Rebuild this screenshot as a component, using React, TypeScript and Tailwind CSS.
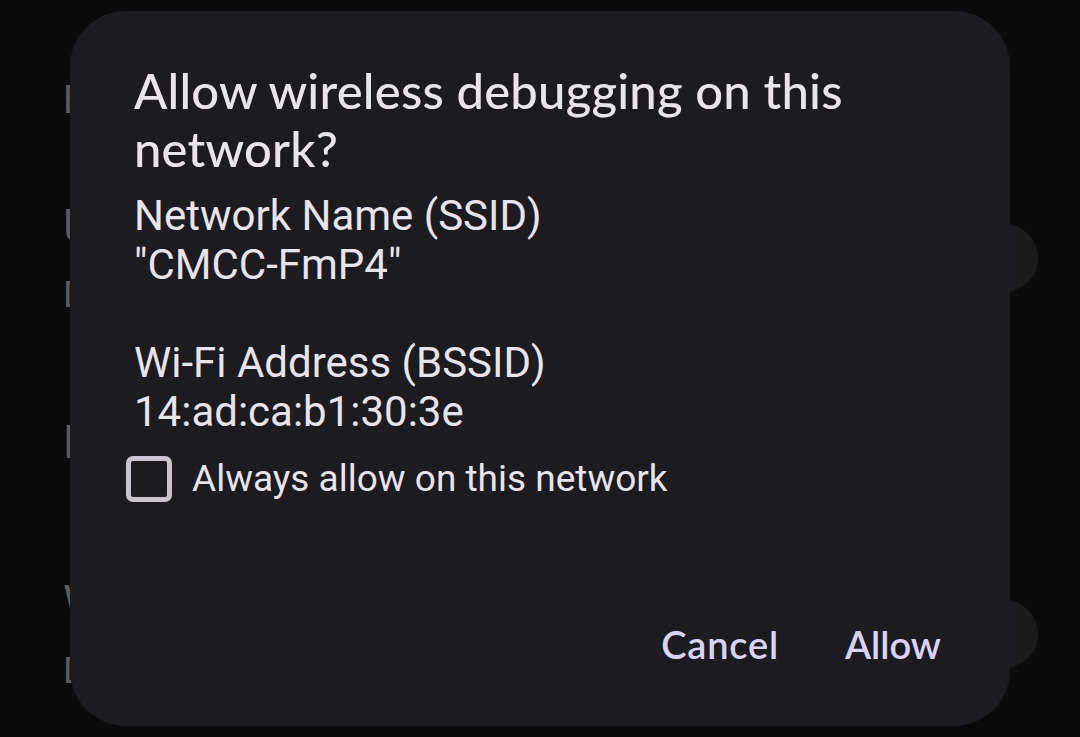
import React from "react";

const BgRow: React.FC<{
  title: string;
  sub?: string;
  toggle?: boolean;
  titleSize?: string;
  className?: string;
}> = ({ title, sub, toggle, titleSize, className }) => (
  <div className={`flex items-center justify-between pl-[63px] pr-[42px] ${className ?? ""}`}>
    <div className="flex flex-col text-[#5c5c5c] whitespace-nowrap">
      <span className={titleSize ?? "text-[46px] leading-[46px]"}>{title}</span>
      {sub && <span className="mt-[28px] text-[36px] leading-[36px]">{sub}</span>}
    </div>
    {toggle && <div className="w-[68px] h-[68px] rounded-full bg-[#1b1b1d]" />}
  </div>
);

const App: React.FC = () => {
  return (
    <div className="relative w-[1080px] h-[737px] overflow-hidden bg-[#0b0b0b] font-['Roboto',sans-serif]">
      {/* settings page behind the scrim */}
      <div className="flex flex-col">
        <BgRow title="Bug report shortcut" titleSize="text-[38px] leading-[38px]" className="mt-[81px]" />
        <BgRow title="USB debugging" sub="Debug mode when USB is connected" toggle className="mt-[84px]" />
        <BgRow title="Revoke USB debugging authorizations" className="mt-[106px]" />
        <BgRow title="Wireless debugging" sub="Debug mode when Wi-Fi is connected" toggle className="mt-[114px]" />
      </div>

      {/* dialog */}
      <div className="absolute inset-0 flex items-center justify-center">
        <div className="w-[940px] h-[715px] rounded-[56px] bg-[#1c1b20] flex flex-col pl-[64px] pr-[69px] pt-[50px] pb-[63px] text-[#e9e4ec]">
          <h1 className="font-['Lato',sans-serif] text-[49px] leading-[58px] font-medium tracking-[0.2px]">
            Allow wireless debugging on this network?
          </h1>
          <div className="mt-[14px] text-[42px] leading-[49px]">
            <div>Network Name (SSID)</div>
            <div>"CMCC-FmP4"</div>
            <div className="h-[49px]" />
            <div>Wi-Fi Address (BSSID)</div>
            <div>14:ad:ca:b1:30:3e</div>
          </div>
          <label className="mt-[19px] -ml-[8px] flex items-center gap-[20px] h-[48px]">
            <span className="w-[46px] h-[46px] rounded-[7px] border-[5px] border-[#c9c4cf]" />
            <span className="text-[37px] leading-[48px]">Always allow on this network</span>
          </label>
          <div className="mt-auto flex justify-end items-center gap-[66px] font-['Lato',sans-serif] text-[38px] leading-[38px] font-semibold text-[#dad3f8]">
            <button className="tracking-[0.8px]">Cancel</button>
            <button>Allow</button>
          </div>
        </div>
      </div>
    </div>
  );
};

export default App;
